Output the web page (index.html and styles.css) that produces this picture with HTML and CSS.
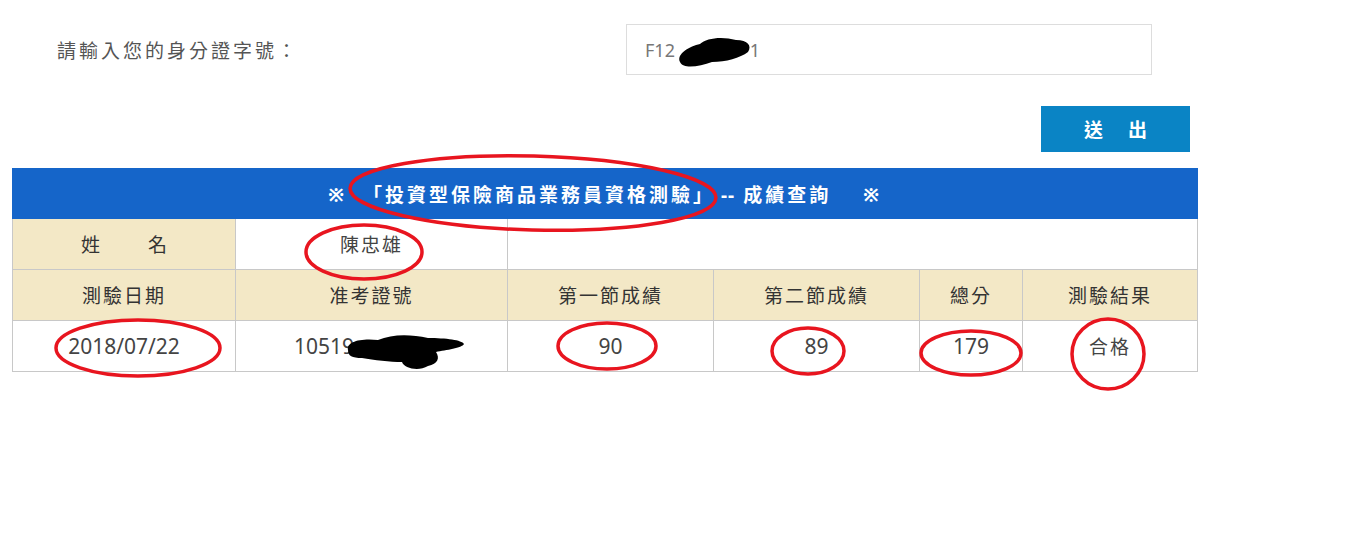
FILE: index.html
```html
<!DOCTYPE html>
<html lang="zh-Hant">
	<head>
		<meta charset="UTF-8" />
		<meta name="viewport" content="width=device-width, initial-scale=1.0" />
		<title>成績查詢</title>
		<link rel="stylesheet" href="styles.css">
	</head>
	<body>
		<div class="page">
			<form class="query-form" onsubmit="return false">
				<div class="field">
					<label for="id-input">請輸入您的身分證字號：</label>
					<input type="text" id="id-input" value="F12                1" />
				</div>
				<div class="actions">
					<button type="submit">送出</button>
				</div>
			</form>

			<table class="score-table">
				<colgroup>
					<col style="width: 223px" />
					<col style="width: 272px" />
					<col style="width: 206px" />
					<col style="width: 206px" />
					<col style="width: 103px" />
					<col style="width: 175px" />
				</colgroup>
				<tr>
					<th colspan="6" class="title">※&nbsp;&nbsp;「投資型保險商品業務員資格測驗」<span class="dash">--</span> 成績查詢&nbsp;&nbsp;&nbsp;&nbsp;※</th>
				</tr>
				<tr>
					<td class="head wide">姓名</td>
					<td>陳忠雄</td>
					<td colspan="4"></td>
				</tr>
				<tr>
					<td class="head">測驗日期</td>
					<td class="head">准考證號</td>
					<td class="head">第一節成績</td>
					<td class="head">第二節成績</td>
					<td class="head">總分</td>
					<td class="head">測驗結果</td>
				</tr>
				<tr>
					<td class="num">2018/07/22</td>
					<td class="num left">10519</td>
					<td class="num">90</td>
					<td class="num">89</td>
					<td class="num">179</td>
					<td>合格</td>
				</tr>
			</table>

			<!-- hand-drawn marks over the screenshot -->
			<svg class="marks" width="1360" height="545" viewBox="0 0 1360 545">
				<g fill="#000">
					<path d="M680 62 C676 54 690 46 700 44 C706 38 722 36 736 40 C748 40 752 46 748 52 C740 58 726 62 712 62 C700 66 684 70 680 62 Z" />
					<path d="M348 350 C346 342 360 338 378 340 C392 334 410 334 428 338 C446 338 462 340 464 344 C462 348 446 350 436 352 C440 358 438 364 428 366 C418 372 404 368 402 362 C390 362 374 360 362 358 C352 358 348 356 348 350 Z" />
				</g>
				<g fill="none" stroke="#e8151f" stroke-width="3.5">
					<ellipse cx="533" cy="193" rx="183" ry="37" transform="rotate(1.5 533 193)" />
					<ellipse cx="364" cy="252" rx="58" ry="27" />
					<ellipse cx="138" cy="348" rx="82" ry="28" />
					<ellipse cx="607" cy="346" rx="49" ry="23" />
					<ellipse cx="808" cy="351" rx="36" ry="23" />
					<ellipse cx="971" cy="353" rx="50" ry="22" />
					<ellipse cx="1108" cy="354" rx="36" ry="35" />
				</g>
			</svg>
		</div>
	</body>
</html>
```

FILE: styles.css
```css
body {
	margin: 0;
	font-family: 'Noto Sans', 'Noto Sans CJK TC', sans-serif;
	color: #444;
	background-color: #fff;
}
.page {
	position: relative;
	width: 1360px;
	height: 545px;
	padding: 24px 0 0 12px;
	box-sizing: border-box;
}
.field {
	display: flex;
	align-items: center;
	padding-left: 45px;
}
.field label {
	width: 569px;
	font-size: 19px;
	letter-spacing: 3px;
	color: #555;
}
.field input {
	width: 526px;
	height: 51px;
	box-sizing: border-box;
	padding: 0 18px;
	border: 1px solid #ddd;
	font-family: inherit;
	font-size: 18px;
	color: #777;
	outline: none;
}
.actions {
	display: flex;
	justify-content: flex-end;
	width: 1178px;
	margin-top: 31px;
}
.actions button {
	width: 149px;
	height: 46px;
	padding: 0;
	border: none;
	background-color: #0a84c5;
	color: #fff;
	font-family: inherit;
	font-size: 19px;
	font-weight: bold;
	letter-spacing: 25px;
	text-indent: 25px;
	cursor: pointer;
}
.score-table {
	margin-top: 16px;
	width: 1185px;
	table-layout: fixed;
	border-collapse: collapse;
	border: 1px solid #ccc;
}
.score-table th,
.score-table td {
	height: 50px;
	padding: 0;
	border: 1px solid #c8c8c8;
	text-align: center;
	font-size: 19px;
	font-weight: normal;
	letter-spacing: 2px;
}
.score-table .title {
	height: 49px;
	background-color: #1565c9;
	border-color: #1565c9;
	color: #fff;
	font-weight: bold;
	letter-spacing: 3px;
}
.score-table .title .dash {
	letter-spacing: 1px;
	margin-left: 6px;
}
.score-table .head {
	background-color: #f3e8c6;
	color: #333;
}
.score-table .wide {
	letter-spacing: 48px;
	text-indent: 48px;
}
.score-table .num {
	font-size: 21px;
	letter-spacing: 0;
}
.score-table .left {
	text-align: left;
	padding-left: 58px;
}
.marks {
	position: absolute;
	top: 0;
	left: 0;
	pointer-events: none;
}
```
